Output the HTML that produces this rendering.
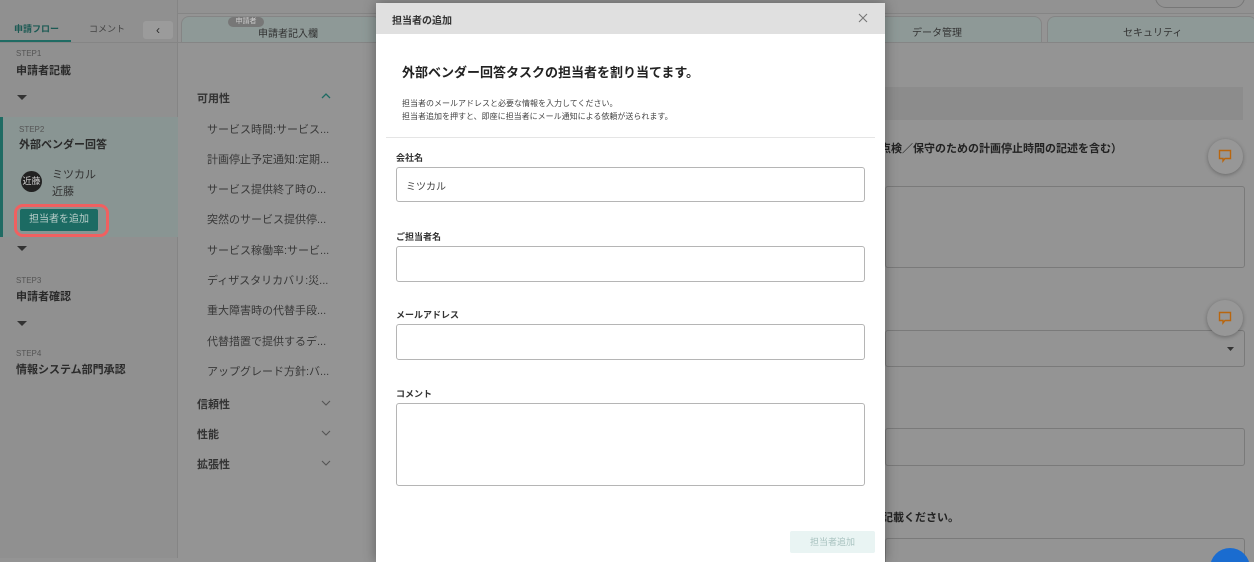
<!DOCTYPE html><html><head><meta charset="utf-8"><style>
*{box-sizing:border-box;margin:0;padding:0}
html{width:1254px;height:562px;overflow:hidden;background:#949494}
body{width:1254px;height:562px;overflow:hidden;background:#949494;font-family:"Liberation Sans","Noto Sans CJK JP",sans-serif;position:relative;color:#2a2a2a}
.a{position:absolute}
.side{left:0;top:0;width:178px;height:558px;background:#909090;border-right:1px solid #858585}
.m{background:#fff;left:376px;top:3px;width:509px;height:559px;box-shadow:0 0 12px rgba(0,0,0,.35);overflow:hidden}
.in{position:absolute;left:20px;width:469px;border:1px solid #b5b5b5;border-radius:3px;background:#fff}
.lb{position:absolute;left:20px;font-size:9px;font-weight:bold;color:#333}
.it{left:207px;font-size:11px;color:#383838}
.cat{left:197px;font-size:11px;font-weight:bold;color:#333}
.chev{left:321px}
</style></head><body>
<div class="a" style="left:0;top:0;width:1254px;height:14px;border-bottom:1px solid #858585;background:#929292"></div>
<div class="a side"></div>
<div class="a" style="left:14px;top:22px;font-size:9px;color:#1c5a54;font-weight:bold">申請フロー</div>
<div class="a" style="left:0;top:40px;width:71px;height:2px;background:#1f6b63"></div>
<div class="a" style="left:89px;top:22px;font-size:9px;color:#444">コメント</div>
<div class="a" style="left:143px;top:21px;width:30px;height:18px;background:#9b9b9b;border-radius:3px;text-align:center;font-size:12px;line-height:18px">‹</div>
<div class="a" style="left:0;top:42px;width:178px;height:1px;background:#858585"></div>
<div class="a" style="left:16px;top:49px;font-size:8px;color:#555">STEP1</div>
<div class="a" style="left:16px;top:62px;font-size:11px;font-weight:bold">申請者記載</div>
<svg class="a" style="left:17px;top:95px" width="10" height="6"><path d="M0 0H10L5 5Z" fill="#333"/></svg>
<div class="a" style="left:0;top:117px;width:178px;height:120px;background:#899593"></div>
<div class="a" style="left:0;top:117px;width:3px;height:120px;background:#1f6b63"></div>
<div class="a" style="left:19px;top:125px;font-size:8px;color:#555">STEP2</div>
<div class="a" style="left:19px;top:136px;font-size:11px;font-weight:bold">外部ベンダー回答</div>
<div class="a" style="left:21px;top:171px;width:21px;height:21px;border-radius:50%;background:#222;color:#ccc;font-size:9px;line-height:21px;text-align:center">近藤</div>
<div class="a" style="left:52px;top:167px;font-size:11px;color:#333;line-height:17px">ミツカル<br>近藤</div>
<div class="a" style="left:14px;top:204px;width:95px;height:33px;border:3px solid #f06060;border-radius:9px"></div>
<div class="a" style="left:20px;top:209px;width:78px;height:22px;background:#1c6b63;border-radius:2px;color:#b8cdc9;font-size:10px;text-align:center;line-height:22px">担当者を追加</div>
<svg class="a" style="left:17px;top:246px" width="10" height="6"><path d="M0 0H10L5 5Z" fill="#333"/></svg>
<div class="a" style="left:16px;top:276px;font-size:8px;color:#555">STEP3</div>
<div class="a" style="left:16px;top:288px;font-size:11px;font-weight:bold">申請者確認</div>
<svg class="a" style="left:17px;top:321px" width="10" height="6"><path d="M0 0H10L5 5Z" fill="#333"/></svg>
<div class="a" style="left:16px;top:349px;font-size:8px;color:#555">STEP4</div>
<div class="a" style="left:16px;top:361px;font-size:11px;font-weight:bold">情報システム部門承認</div>
<div class="a" style="left:181px;top:16px;width:200px;height:26px;border:1px solid #858585;border-bottom:none;border-radius:8px 8px 0 0;background:#8e9997"></div>
<div class="a" style="left:228px;top:17px;width:36px;height:10px;border-radius:5px;background:#777;color:#ccc;font-size:7px;text-align:center;line-height:10px">申請者</div>
<div class="a" style="left:258px;top:25px;font-size:10px;color:#333">申請者記入欄</div>
<div class="a" style="left:178px;top:42px;width:1076px;height:1px;background:#858585"></div>
<div class="a" style="left:875px;top:16px;width:167px;height:26px;border:1px solid #858585;border-bottom:none;border-radius:0 8px 0 0;background:#8e9997"></div>
<div class="a" style="left:912px;top:24px;font-size:10px;color:#333">データ管理</div>
<div class="a" style="left:1047px;top:16px;width:210px;height:26px;border:1px solid #858585;border-bottom:none;border-radius:8px 8px 0 0;background:#8e9997"></div>
<div class="a" style="left:1123px;top:24px;font-size:10px;color:#333">セキュリティ</div>
<div class="a" style="left:1155px;top:-14px;width:90px;height:22px;border:1px solid #777;border-radius:11px"></div>
<div class="a cat" style="top:90px">可用性</div><svg class="a chev" style="top:93px" width="10" height="6"><path d="M1 5L5 1L9 5" stroke="#1f6b63" stroke-width="1.3" fill="none"/></svg>
<div class="a it" style="top:121px">サービス時間:サービス...</div>
<div class="a it" style="top:151px">計画停止予定通知:定期...</div>
<div class="a it" style="top:181px">サービス提供終了時の...</div>
<div class="a it" style="top:211px">突然のサービス提供停...</div>
<div class="a it" style="top:242px">サービス稼働率:サービ...</div>
<div class="a it" style="top:272px">ディザスタリカバリ:災...</div>
<div class="a it" style="top:302px">重大障害時の代替手段...</div>
<div class="a it" style="top:333px">代替措置で提供するデ...</div>
<div class="a it" style="top:363px">アップグレード方針:バ...</div>
<div class="a cat" style="top:396px">信頼性</div><svg class="a chev" style="top:400px" width="10" height="6"><path d="M1 1L5 5L9 1" stroke="#555" stroke-width="1.1" fill="none"/></svg>
<div class="a cat" style="top:426px">性能</div><svg class="a chev" style="top:430px" width="10" height="6"><path d="M1 1L5 5L9 1" stroke="#555" stroke-width="1.1" fill="none"/></svg>
<div class="a cat" style="top:456px">拡張性</div><svg class="a chev" style="top:460px" width="10" height="6"><path d="M1 1L5 5L9 1" stroke="#555" stroke-width="1.1" fill="none"/></svg>
<div class="a" style="left:885px;top:87px;width:358px;height:33px;background:#8c8c8c"></div>
<div class="a" style="left:880px;top:140px;font-size:11px;font-weight:bold;color:#222">点検／保守のための計画停止時間の記述を含む）</div>
<div class="a" style="left:885px;top:186px;width:360px;height:82px;border:1px solid #7a7a7a;border-radius:3px"></div>
<div class="a" style="left:1208px;top:139px;width:35px;height:35px;border-radius:50%;background:#979797;box-shadow:0 1px 4px rgba(0,0,0,.3)"></div>
<svg class="a" style="left:1218px;top:149px" width="14" height="14"><path d="M1.5 1.5H12.5V9.5H7L5 12V9.5H1.5Z" stroke="#b8660f" stroke-width="1.4" fill="none"/></svg>
<div class="a" style="left:885px;top:330px;width:360px;height:37px;border:1px solid #7a7a7a;border-radius:3px"></div>
<svg class="a" style="left:1227px;top:347px" width="7" height="4"><path d="M0 0H7L3.5 4Z" fill="#333"/></svg>
<div class="a" style="left:1207px;top:300px;width:36px;height:36px;border-radius:50%;background:#979797;box-shadow:0 1px 4px rgba(0,0,0,.3)"></div>
<svg class="a" style="left:1218px;top:311px" width="14" height="14"><path d="M1.5 1.5H12.5V9.5H7L5 12V9.5H1.5Z" stroke="#b8660f" stroke-width="1.4" fill="none"/></svg>
<div class="a" style="left:885px;top:428px;width:360px;height:38px;border:1px solid #7a7a7a;border-radius:3px"></div>
<div class="a" style="left:882px;top:509px;font-size:11px;font-weight:bold;color:#222">記載ください。</div>
<div class="a" style="left:885px;top:538px;width:360px;height:40px;border:1px solid #7a7a7a;border-radius:3px"></div>
<div class="a" style="left:1210px;top:548px;width:40px;height:40px;border-radius:50%;background:#1a6cd0"></div>
<div class="a m">
 <div class="a" style="left:0;top:0;width:509px;height:31px;background:#e0e0e0"></div>
 <div class="a" style="left:16px;top:9px;font-size:10px;font-weight:bold;color:#333">担当者の追加</div>
 <svg class="a" style="left:482px;top:10px" width="10" height="10"><path d="M1 1L9 9M9 1L1 9" stroke="#777" stroke-width="1.1"/></svg>
 <div class="a" style="left:26px;top:59px;font-size:13px;font-weight:bold;color:#222">外部ベンダー回答タスクの担当者を割り当てます。</div>
 <div class="a" style="left:26px;top:94px;font-size:8px;color:#444;line-height:13px">担当者のメールアドレスと必要な情報を入力してください。<br>担当者追加を押すと、即座に担当者にメール通知による依頼が送られます。</div>
 <div class="a" style="left:10px;top:134px;width:489px;height:1px;background:#e5e5e5"></div>
 <div class="lb" style="top:148px">会社名</div>
 <div class="in" style="top:164px;height:35px"><span style="position:absolute;left:9px;top:10px;font-size:10px;color:#444">ミツカル</span></div>
 <div class="lb" style="top:227px">ご担当者名</div>
 <div class="in" style="top:243px;height:36px"></div>
 <div class="lb" style="top:305px">メールアドレス</div>
 <div class="in" style="top:321px;height:36px"></div>
 <div class="lb" style="top:384px">コメント</div>
 <div class="in" style="top:400px;height:83px"></div>
 <div class="a" style="left:414px;top:528px;width:85px;height:22px;background:#e9f4f3;border-radius:2px;color:#a8c2bf;font-size:9px;text-align:center;line-height:22px">担当者追加</div>
</div>
</body></html>
